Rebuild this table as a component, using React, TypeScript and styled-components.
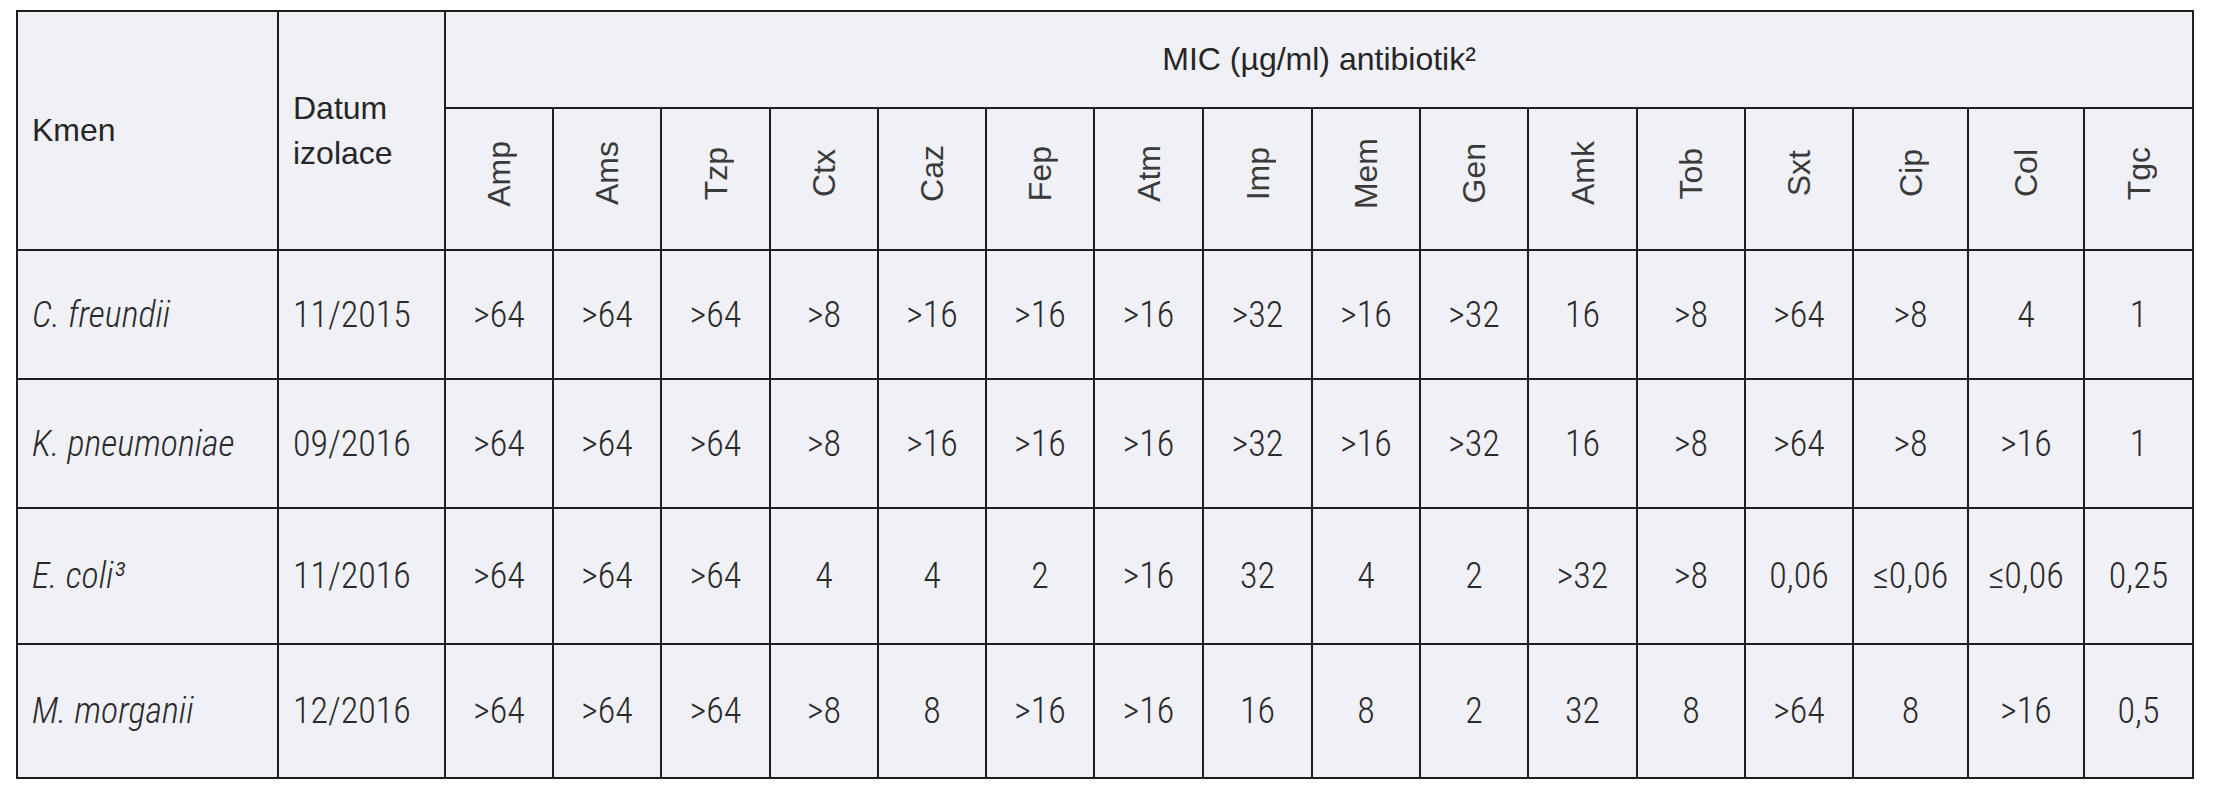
import React from "react";
import styled, { createGlobalStyle } from "styled-components";

const antibiotics = [
  "Amp", "Ams", "Tzp", "Ctx", "Caz", "Fep", "Atm", "Imp",
  "Mem", "Gen", "Amk", "Tob", "Sxt", "Cip", "Col", "Tgc",
];

const colWidths = [
  261, 167, 108, 108, 109, 108, 108, 108, 109, 109, 108, 108, 109, 108, 108, 115, 116, 109,
];

const rows = [
  {
    name: "C. freundii",
    date: "11/2015",
    rowHeight: 129,
    values: [">64", ">64", ">64", ">8", ">16", ">16", ">16", ">32", ">16", ">32", "16", ">8", ">64", ">8", "4", "1"],
  },
  {
    name: "K. pneumoniae",
    date: "09/2016",
    rowHeight: 129,
    values: [">64", ">64", ">64", ">8", ">16", ">16", ">16", ">32", ">16", ">32", "16", ">8", ">64", ">8", ">16", "1"],
  },
  {
    name: "E. coli³",
    date: "11/2016",
    rowHeight: 136,
    values: [">64", ">64", ">64", "4", "4", "2", ">16", "32", "4", "2", ">32", ">8", "0,06", "≤0,06", "≤0,06", "0,25"],
  },
  {
    name: "M. morganii",
    date: "12/2016",
    rowHeight: 134,
    values: [">64", ">64", ">64", ">8", "8", ">16", ">16", "16", "8", "2", "32", "8", ">64", "8", ">16", "0,5"],
  },
];

const GlobalStyle = createGlobalStyle`
  body {
    margin: 0;
    background: #ffffff;
  }
`;

const Page = styled.div`
  padding: 10px 0 0 16px;
`;

const Table = styled.table`
  width: 2176px;
  table-layout: fixed;
  border-collapse: collapse;
  background-color: #f0f0f7;
`;

const HeadRow = styled.tr<{ $height: number }>`
  height: ${(p) => p.$height}px;
`;

const HeadCell = styled.th<{ $align?: string }>`
  border: 2px solid #1e1e1e;
  padding: 0 14px;
  font-family: "Liberation Sans", Arial, sans-serif;
  font-size: 32px;
  font-weight: 400;
  line-height: 1.38;
  color: #262626;
  text-align: ${(p) => p.$align || "left"};
  vertical-align: middle;
`;

const Rotated = styled.span`
  display: inline-block;
  writing-mode: vertical-rl;
  transform: rotate(180deg);
  font-family: "Liberation Sans", Arial, sans-serif;
  font-size: 32px;
  color: #3a3a3a;
  line-height: 1;
`;

const DataRow = styled.tr<{ $height: number }>`
  height: ${(p) => p.$height}px;
`;

const Cell = styled.td<{ $align?: string }>`
  border: 2px solid #1e1e1e;
  padding: 0 14px;
  font-family: "Liberation Sans Narrow", "Roboto Condensed", "Liberation Sans", sans-serif;
  font-size: 36px;
  font-weight: 300;
  color: #2a2a2a;
  text-align: ${(p) => p.$align || "center"};
  vertical-align: middle;
  white-space: nowrap;
`;

const Species = styled.span`
  font-style: italic;
`;

export default function App() {
  return (
    <Page>
      <GlobalStyle />
      <Table>
        <colgroup>
          {colWidths.map((w, i) => (
            <col key={i} style={{ width: w }} />
          ))}
        </colgroup>
        <thead>
          <HeadRow $height={97}>
            <HeadCell rowSpan={2}>Kmen</HeadCell>
            <HeadCell rowSpan={2}>
              Datum
              <br />
              izolace
            </HeadCell>
            <HeadCell colSpan={16} $align="center">
              MIC (µg/ml) antibiotik²
            </HeadCell>
          </HeadRow>
          <HeadRow $height={142}>
            {antibiotics.map((a) => (
              <HeadCell key={a} $align="center">
                <Rotated>{a}</Rotated>
              </HeadCell>
            ))}
          </HeadRow>
        </thead>
        <tbody>
          {rows.map((r) => (
            <DataRow key={r.name} $height={r.rowHeight}>
              <Cell $align="left">
                <Species>{r.name}</Species>
              </Cell>
              <Cell $align="left">{r.date}</Cell>
              {r.values.map((v, i) => (
                <Cell key={i}>{v}</Cell>
              ))}
            </DataRow>
          ))}
        </tbody>
      </Table>
    </Page>
  );
}
